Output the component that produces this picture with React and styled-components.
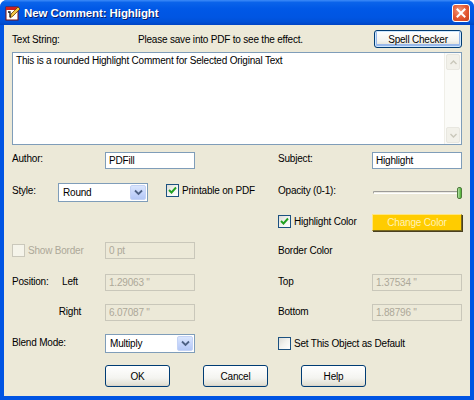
import React from "react";
import styled, { createGlobalStyle, css } from "styled-components";

const Global = createGlobalStyle`
  html, body { margin: 0; padding: 0; background: #fff; }
  body { font-family: "Liberation Sans", Arial, sans-serif; font-size: 10px; letter-spacing: -0.2px; color: #000; }
  * { box-sizing: border-box; }
`;

const Window = styled.div`
  width: 474px;
  height: 400px;
  display: flex;
  flex-direction: column;
  background: #0054e3;
  border-radius: 7px 7px 0 0;
  overflow: hidden;
`;

const TitleBar = styled.div`
  height: 25px;
  flex: none;
  display: flex;
  align-items: center;
  padding: 0 4px 0 5px;
  gap: 3px;
  background: linear-gradient(
    to bottom,
    #3d8bf8 0%,
    #0a63ea 10%,
    #0058e6 35%,
    #0055e2 70%,
    #0050d6 88%,
    #0044c4 100%
  );
`;

const TitleText = styled.div`
  flex: 1;
  color: #fff;
  font-family: "Liberation Sans", Arial, sans-serif;
  font-weight: bold;
  font-size: 11.5px;
  letter-spacing: -0.1px;
  text-shadow: 1px 1px 0 #0a1e6a;
`;

const CloseButton = styled.div`
  width: 18px;
  height: 18px;
  border-radius: 3px;
  border: 1px solid #fff;
  background: radial-gradient(circle at 40% 35%, #f19a7c 0%, #e3552f 55%, #c7401c 100%);
  display: flex;
  align-items: center;
  justify-content: center;
`;

const Body = styled.div`
  flex: 1;
  margin: 0 4px 4px 4px;
  background: #ece9d8;
  padding: 5px 8px 0 8px;
  display: flex;
  flex-direction: column;
`;

const TopRow = styled.div`
  display: flex;
  align-items: center;
  height: 18px;
  margin-bottom: 4px;
`;

const TopLabel = styled.div`
  width: 126px;
  padding-top: 1px;
`;

const Notice = styled.div`
  flex: 1;
  padding-top: 1px;
`;

const xpButton = css`
  font-family: "Liberation Sans", Arial, sans-serif;
  font-size: 10px;
  letter-spacing: -0.2px;
  color: #000;
  border: 1px solid #003c74;
  border-radius: 3px;
  background: linear-gradient(to bottom, #ffffff 0%, #f4f4f0 60%, #e3e1d5 92%, #d6d0c5 100%);
  display: flex;
  align-items: center;
  justify-content: center;
  padding: 0;
`;

const Button = styled.button`
  ${xpButton}
  width: ${(p) => p.$w}px;
  height: ${(p) => p.$h || 22}px;
  box-shadow: ${(p) =>
    p.$focus ? "inset 0 0 0 1px #cee7ff, inset 0 -1px 0 2px #98b8ea" : "none"};
`;

const TextArea = styled.div`
  height: 93px;
  background: #fff;
  border: 1px solid #7f9db9;
  display: flex;
  margin-bottom: 7px;
`;

const TextContent = styled.div`
  flex: 1;
  padding: 2px 3px;
`;

const ScrollBar = styled.div`
  width: 17px;
  background: #fbfbf8;
  border-left: 1px solid #f0efe8;
  display: flex;
  flex-direction: column;
  justify-content: space-between;
  padding: 1px 0;
`;

const ScrollArrow = styled.div`
  height: 16px;
  margin: 0 1px;
  border-radius: 2px;
  background: #f2f1ea;
  border: 1px solid #e8e7e0;
  display: flex;
  align-items: center;
  justify-content: center;
`;

const Form = styled.div`
  display: grid;
  grid-template-columns: 93px 90px 83px 94px 90px;
  grid-template-rows: 31px 31px 28px 32px 30px 30px 31px 22px;
  align-items: start;
`;

const Label = styled.div`
  padding-top: ${(p) => p.$pt ?? 2}px;
  color: ${(p) => (p.$disabled ? "#aca899" : "#000")};
  display: flex;
  align-items: center;
`;

const LeadLabel = styled.span`
  width: 43px;
`;

const SubLabel = styled.span`
  width: 30px;
  text-align: center;
`;

const Input = styled.div`
  height: 17px;
  border: 1px solid ${(p) => (p.$disabled ? "#c9c7ba" : "#7f9db9")};
  background: ${(p) => (p.$disabled ? "#ece9d8" : "#fff")};
  color: ${(p) => (p.$disabled ? "#aca899" : "#000")};
  padding: 0 3px;
  display: flex;
  align-items: center;
  white-space: nowrap;
`;

const Select = styled.div`
  height: ${(p) => p.$h || 19}px;
  width: 90px;
  margin-left: ${(p) => p.$ml || 0}px;
  border: 1px solid #7f9db9;
  background: #fff;
  display: flex;
  align-items: stretch;
  padding: 1px;
`;

const SelectValue = styled.div`
  flex: 1;
  display: flex;
  align-items: center;
  padding: 0 3px;
`;

const DropButton = styled.div`
  width: 16px;
  border-radius: 2px;
  background: linear-gradient(to bottom, #dae6fd 0%, #c3d3fb 60%, #b4c8f6 100%);
  border: 1px solid #c4d3f6;
  display: flex;
  align-items: center;
  justify-content: center;
`;

const CheckRow = styled.div`
  display: flex;
  align-items: center;
  gap: 3px;
  padding-top: ${(p) => p.$pt ?? 1}px;
  margin-left: ${(p) => p.$ml || 0}px;
  color: ${(p) => (p.$disabled ? "#aca899" : "#000")};
  white-space: nowrap;
`;

const Box = styled.span`
  width: 13px;
  height: 13px;
  flex: none;
  border: 1px solid ${(p) => (p.$disabled ? "#cac8bb" : "#1c5180")};
  background: ${(p) =>
    p.$disabled ? "#f5f4ea" : "linear-gradient(135deg, #dcdcd7 0%, #f3f3ef 50%, #ffffff 100%)"};
  display: flex;
  align-items: center;
  justify-content: center;
`;

const Slider = styled.div`
  height: 17px;
  margin-top: 1px;
  display: flex;
  align-items: center;
  justify-content: flex-end;
  position: relative;
`;

const Track = styled.div`
  position: absolute;
  left: 1px;
  right: 2px;
  top: 7px;
  height: 3px;
  border-radius: 2px;
  background: #ecebe3;
  border: 1px solid #9d9c99;
  border-right-color: #fff;
  border-bottom-color: #fff;
`;

const Thumb = styled.div`
  position: relative;
  width: 5px;
  height: 12px;
  border-radius: 2px;
  background: linear-gradient(to right, #b6dfa8, #4cb02f);
  border: 1px solid #4d7a3b;
`;

const ColorButton = styled.div`
  height: 17px;
  background: #ffcc00;
  border: 1px solid #ffe680;
  border-right-color: #7a6a1c;
  border-bottom-color: #7a6a1c;
  box-shadow: 1px 1px 0 #4a4020;
  color: #fff2b8;
  display: flex;
  align-items: center;
  justify-content: center;
`;

const ButtonBar = styled.div`
  grid-column: 1 / -1;
  display: flex;
  padding-left: 93px;
  gap: 33px;
`;

const Chevron = () => (
  <svg width="9" height="7" viewBox="0 0 9 7">
    <path d="M1 1.5 L4.5 5 L8 1.5" fill="none" stroke="#4d6185" strokeWidth="1.8" />
  </svg>
);

const Check = () => (
  <svg width="9" height="9" viewBox="0 0 9 9">
    <path d="M1 4 L3.5 6.5 L8 1.5" fill="none" stroke="#21a121" strokeWidth="1.9" />
  </svg>
);

const AppIcon = () => (
  <svg width="16" height="16" viewBox="0 0 16 16">
    <rect x="1" y="2" width="12" height="13" fill="#fff" stroke="#7a1010" strokeWidth="1" />
    <rect x="1" y="2" width="12" height="3" fill="#d02020" />
    <path d="M5 13 L6 9 L13 2 L15 4 L8 11 Z" fill="#f2c744" stroke="#6a3a00" strokeWidth="0.8" />
    <path d="M3 7 L5 7 L5 12" fill="none" stroke="#1a1a1a" strokeWidth="1.3" />
  </svg>
);

const CloseX = () => (
  <svg width="10" height="10" viewBox="0 0 10 10">
    <path d="M1.5 1.5 L8.5 8.5 M8.5 1.5 L1.5 8.5" stroke="#fff" strokeWidth="2" strokeLinecap="square" />
  </svg>
);

const ArrowUp = () => (
  <svg width="7" height="5" viewBox="0 0 7 5">
    <path d="M0.5 4 L3.5 1 L6.5 4" fill="none" stroke="#c9c7ba" strokeWidth="1.4" />
  </svg>
);
const ArrowDown = () => (
  <svg width="7" height="5" viewBox="0 0 7 5">
    <path d="M0.5 1 L3.5 4 L6.5 1" fill="none" stroke="#c9c7ba" strokeWidth="1.4" />
  </svg>
);

export default function App() {
  return (
    <>
      <Global />
      <Window>
        <TitleBar>
          <AppIcon />
          <TitleText>New Comment: Highlight</TitleText>
          <CloseButton>
            <CloseX />
          </CloseButton>
        </TitleBar>
        <Body>
          <TopRow>
            <TopLabel>Text String:</TopLabel>
            <Notice>Please save into PDF to see the effect.</Notice>
            <Button $w={88} $h={18} $focus>
              Spell Checker
            </Button>
          </TopRow>
          <TextArea>
            <TextContent>This is a rounded Highlight Comment for Selected Original Text</TextContent>
            <ScrollBar>
              <ScrollArrow>
                <ArrowUp />
              </ScrollArrow>
              <ScrollArrow>
                <ArrowDown />
              </ScrollArrow>
            </ScrollBar>
          </TextArea>
          <Form>
            {/* Row 1 */}
            <Label $pt={1}>Author:</Label>
            <Input>PDFill</Input>
            <div />
            <Label $pt={1}>Subject:</Label>
            <Input>Highlight</Input>

            {/* Row 2 */}
            <Label $pt={2}>Style:</Label>
            <Select $ml={-47}>
              <SelectValue>Round</SelectValue>
              <DropButton>
                <Chevron />
              </DropButton>
            </Select>
            <CheckRow $pt={1} $ml={-29}>
              <Box>
                <Check />
              </Box>
              Printable on PDF
            </CheckRow>
            <Label $pt={2}>Opacity (0-1):</Label>
            <Slider>
              <Track />
              <Thumb />
            </Slider>

            {/* Row 3 */}
            <div />
            <div />
            <div />
            <CheckRow $pt={1}>
              <Box>
                <Check />
              </Box>
              Highlight Color
            </CheckRow>
            <ColorButton>Change Color</ColorButton>

            {/* Row 4 */}
            <CheckRow $disabled $pt={2}>
              <Box $disabled />
              Show Border
            </CheckRow>
            <Input $disabled>0 pt</Input>
            <div />
            <Label $pt={3}>Border Color</Label>
            <div />

            {/* Row 5 */}
            <Label $pt={2}>
              <LeadLabel>Position:</LeadLabel>
              <SubLabel>Left</SubLabel>
            </Label>
            <Input $disabled>1.29063 ''</Input>
            <div />
            <Label $pt={2}>Top</Label>
            <Input $disabled>1.37534 ''</Input>

            {/* Row 6 */}
            <Label $pt={2}>
              <LeadLabel />
              <SubLabel>Right</SubLabel>
            </Label>
            <Input $disabled>6.07087 ''</Input>
            <div />
            <Label $pt={2}>Bottom</Label>
            <Input $disabled>1.88796 ''</Input>

            {/* Row 7 */}
            <Label $pt={3}>Blend Mode:</Label>
            <Select>
              <SelectValue>Multiply</SelectValue>
              <DropButton>
                <Chevron />
              </DropButton>
            </Select>
            <div />
            <CheckRow $pt={3}>
              <Box />
              Set This Object as Default
            </CheckRow>
            <div />

            {/* Row 8 */}
            <ButtonBar>
              <Button $w={65}>OK</Button>
              <Button $w={65}>Cancel</Button>
              <Button $w={65}>Help</Button>
            </ButtonBar>
          </Form>
        </Body>
      </Window>
    </>
  );
}
